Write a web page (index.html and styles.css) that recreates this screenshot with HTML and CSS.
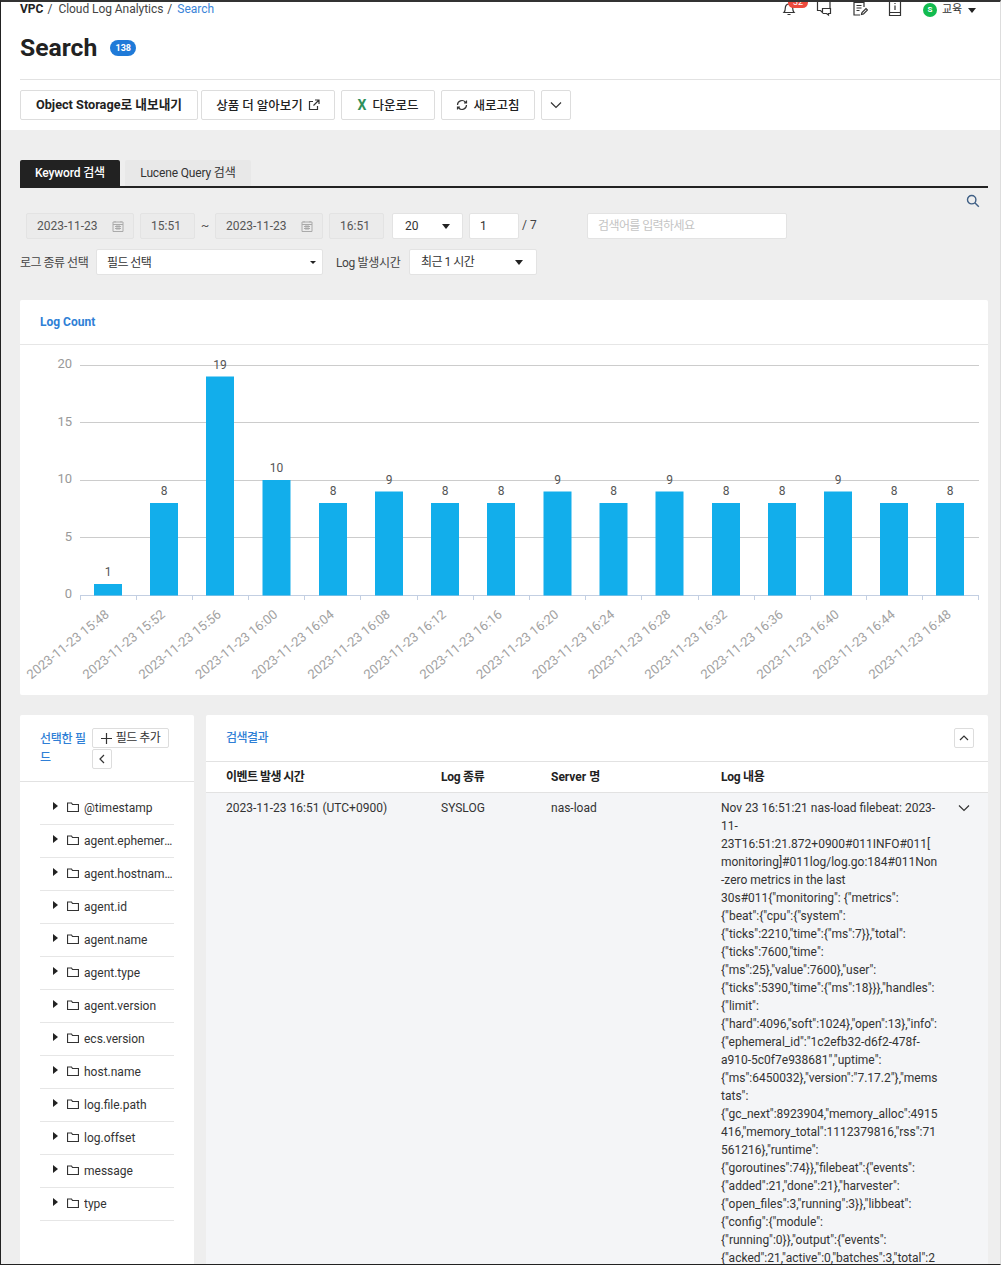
FILE: index.html
```html
<!DOCTYPE html>
<html lang="ko">
<head>
<meta charset="utf-8">
<title>Search</title>
<link rel="stylesheet" href="styles.css">
</head>
<body>
<div class="page">
  <header class="head">
    <div class="topbar">
      <div class="crumbs"><b>VPC</b><span class="sep">/</span><span>Cloud Log Analytics</span><span class="sep">/</span><span class="cur">Search</span></div>
      <div class="tools">
        <span class="tool bell">
          <svg width="16" height="16" viewBox="0 0 16 16" class="ico"><path d="M3 11.5c1.2-1.2 1.3-2.6 1.3-4.4C4.300 4.600 5.900 3 8 3s3.700 1.600 3.700 4.100c0 1.800.1 3.200 1.300 4.400zM6.500 13.500h3"/></svg>
          <span class="redbadge">32</span>
        </span>
        <svg width="16" height="16" viewBox="0 0 16 16" class="ico tool t2"><path d="M1.500 1v8.500h3l2 2V7.500h8v5h-2v1.500l-2-1.500H7M14 7V1"/></svg>
        <svg width="16" height="16" viewBox="0 0 16 16" class="ico tool t3"><path d="M12 6V1.500H2v12.500h6M4.500 4.500h5M4.500 7h5M4.500 9.500h3M9.500 13.500l.5-2 4-4 1.500 1.500-4 4z"/></svg>
        <svg width="16" height="16" viewBox="0 0 16 16" class="ico tool t4"><path d="M2.500 1v13.500h11V1M2.500 11.500h11M8 2v1M8 4.500V9"/></svg>
        <span class="user"><span class="avatar">S</span><span>교육</span><i class="caret"></i></span>
      </div>
    </div>
    <div class="titlerow"><h1>Search</h1><span class="count">138</span></div>
    <div class="actions">
      <button class="btn strong">Object Storage로 내보내기</button>
      <button class="btn">상품 더 알아보기
        <svg width="12" height="12" viewBox="0 0 12 12" class="ico"><path d="M9.500 7v3.500h-8v-8H5M7 1h4v4M11 1L5.500 6.500"/></svg>
      </button>
      <button class="btn dl"><span class="xl">X</span>다운로드</button>
      <button class="btn ref">
        <svg width="12" height="12" viewBox="0 0 12 12" class="ico"><path d="M1.500 6a4.500 4.500 0 0 1 7.800-3l1 1M10.500 6a4.500 4.500 0 0 1-7.800 3l-1-1M10.500 1.500V4H8M1.500 10.500V8H4"/></svg>
        새로고침</button>
      <button class="btn more"><svg width="12" height="8" viewBox="0 0 12 8" class="ico"><path d="M1 1.500l5 5 5-5"/></svg></button>
    </div>
  </header>

  <main class="content">
    <div class="tabs">
      <div class="tab on">Keyword 검색</div>
      <div class="tab">Lucene Query 검색</div>
    </div>
    <div class="searchicon"><svg width="14" height="14" viewBox="0 0 14 14" class="ico blue"><circle cx="5.700" cy="5.700" r="4.200"/><path d="M8.800 8.800l4 4"/></svg></div>

    <div class="filters">
      <div class="field off date">2023-11-23<svg width="12" height="12" viewBox="0 0 12 12" class="cal"><path d="M1 2h10v9.500H1zM1 4.500h10M3 1v1.500M9 1v1.500M3 6.500h6M3 8.500h6M5 5v5M7 5v5"/></svg></div>
      <div class="field off time">15:51</div>
      <span class="tilde">~</span>
      <div class="field off date">2023-11-23<svg width="12" height="12" viewBox="0 0 12 12" class="cal"><path d="M1 2h10v9.500H1zM1 4.500h10M3 1v1.500M9 1v1.500M3 6.500h6M3 8.500h6M5 5v5M7 5v5"/></svg></div>
      <div class="field off time">16:51</div>
      <div class="field sel size">20<i class="caret"></i></div>
      <div class="field page-no">1</div>
      <span class="pages">/ 7</span>
      <div class="field kw">검색어를 입력하세요</div>
    </div>
    <div class="filters second">
      <span class="lbl">로그 종류 선택</span>
      <div class="field sel type"><span class="seltext">필드 선택</span><i class="caret small"></i></div>
      <span class="lbl lbl2">Log 발생시간</span>
      <div class="field sel range">최근 1 시간<i class="caret"></i></div>
    </div>

    <section class="card chart">
      <div class="cardhead">Log Count</div>
      <svg class="plot" width="968" height="350" viewBox="20 345 968 350">
        <g class="grid">
          <path d="M80 365.500H979M80 422.500H979M80 480.500H979M80 537.500H979"/>
        </g>
        <path class="axis" d="M80 595.500H979M80.500 595v5M136.500 595v5M192.500 595v5M248.500 595v5M304.500 595v5M360.500 595v5M417.500 595v5M473.500 595v5M529.500 595v5M585.500 595v5M641.500 595v5M698.500 595v5M754.500 595v5M810.500 595v5M866.500 595v5M922.500 595v5M978.500 595v5"/>
        <g class="yl">
          <text x="72" y="368">20</text><text x="72" y="426">15</text><text x="72" y="483">10</text><text x="72" y="541">5</text><text x="72" y="598">0</text>
        </g>
        <g class="bars">
          <rect x="94" y="584" width="28" height="11.500"/>
          <rect x="150" y="503" width="28" height="92.500"/>
          <rect x="206" y="376.500" width="28" height="219"/>
          <rect x="262.500" y="480" width="28" height="115.500"/>
          <rect x="319" y="503" width="28" height="92.500"/>
          <rect x="375" y="491.500" width="28" height="104"/>
          <rect x="431" y="503" width="28" height="92.500"/>
          <rect x="487" y="503" width="28" height="92.500"/>
          <rect x="543.500" y="491.500" width="28" height="104"/>
          <rect x="599.500" y="503" width="28" height="92.500"/>
          <rect x="655.500" y="491.500" width="28" height="104"/>
          <rect x="712" y="503" width="28" height="92.500"/>
          <rect x="768" y="503" width="28" height="92.500"/>
          <rect x="824" y="491.500" width="28" height="104"/>
          <rect x="880" y="503" width="28" height="92.500"/>
          <rect x="936" y="503" width="28" height="92.500"/>
        </g>
        <g class="vals">
          <text x="108" y="576">1</text><text x="164" y="495">8</text><text x="220" y="369">19</text><text x="276.500" y="472">10</text><text x="333" y="495">8</text><text x="389" y="484">9</text><text x="445" y="495">8</text><text x="501" y="495">8</text><text x="557.500" y="484">9</text><text x="613.500" y="495">8</text><text x="669.500" y="484">9</text><text x="726" y="495">8</text><text x="782" y="495">8</text><text x="838" y="484">9</text><text x="894" y="495">8</text><text x="950" y="495">8</text>
        </g>
        <g class="xl">
          <text transform="translate(110 616) rotate(-39)">2023-11-23 15:48</text>
          <text transform="translate(166 616) rotate(-39)">2023-11-23 15:52</text>
          <text transform="translate(222 616) rotate(-39)">2023-11-23 15:56</text>
          <text transform="translate(278.500 616) rotate(-39)">2023-11-23 16:00</text>
          <text transform="translate(335 616) rotate(-39)">2023-11-23 16:04</text>
          <text transform="translate(391 616) rotate(-39)">2023-11-23 16:08</text>
          <text transform="translate(447 616) rotate(-39)">2023-11-23 16:12</text>
          <text transform="translate(503 616) rotate(-39)">2023-11-23 16:16</text>
          <text transform="translate(559.500 616) rotate(-39)">2023-11-23 16:20</text>
          <text transform="translate(615.500 616) rotate(-39)">2023-11-23 16:24</text>
          <text transform="translate(671.500 616) rotate(-39)">2023-11-23 16:28</text>
          <text transform="translate(728 616) rotate(-39)">2023-11-23 16:32</text>
          <text transform="translate(784 616) rotate(-39)">2023-11-23 16:36</text>
          <text transform="translate(840 616) rotate(-39)">2023-11-23 16:40</text>
          <text transform="translate(896 616) rotate(-39)">2023-11-23 16:44</text>
          <text transform="translate(952 616) rotate(-39)">2023-11-23 16:48</text>
        </g>
      </svg>
    </section>

    <div class="lower">
      <aside class="card side">
        <div class="sidehead">
          <div class="sidetitle">선택한 필<br>드</div>
          <div class="sidebtns">
            <button class="mini add"><svg width="11" height="11" viewBox="0 0 11 11" class="ico"><path d="M5.500 0v11M0 5.500h11"/></svg>필드 추가</button>
            <button class="mini back"><svg width="6" height="10" viewBox="0 0 6 10" class="ico"><path d="M5 1L1 5l4 4"/></svg></button>
          </div>
        </div>
        <ul class="fields">
          <li><i class="tri"></i><svg width="12" height="10" viewBox="0 0 12 10" class="ico"><path d="M.5 1h4l1 1.500h6v7H.5z"/></svg><span>@timestamp</span></li>
          <li><i class="tri"></i><svg width="12" height="10" viewBox="0 0 12 10" class="ico"><path d="M.5 1h4l1 1.500h6v7H.5z"/></svg><span>agent.ephemeral_id</span></li>
          <li><i class="tri"></i><svg width="12" height="10" viewBox="0 0 12 10" class="ico"><path d="M.5 1h4l1 1.500h6v7H.5z"/></svg><span>agent.hostname.keyword</span></li>
          <li><i class="tri"></i><svg width="12" height="10" viewBox="0 0 12 10" class="ico"><path d="M.5 1h4l1 1.500h6v7H.5z"/></svg><span>agent.id</span></li>
          <li><i class="tri"></i><svg width="12" height="10" viewBox="0 0 12 10" class="ico"><path d="M.5 1h4l1 1.500h6v7H.5z"/></svg><span>agent.name</span></li>
          <li><i class="tri"></i><svg width="12" height="10" viewBox="0 0 12 10" class="ico"><path d="M.5 1h4l1 1.500h6v7H.5z"/></svg><span>agent.type</span></li>
          <li><i class="tri"></i><svg width="12" height="10" viewBox="0 0 12 10" class="ico"><path d="M.5 1h4l1 1.500h6v7H.5z"/></svg><span>agent.version</span></li>
          <li><i class="tri"></i><svg width="12" height="10" viewBox="0 0 12 10" class="ico"><path d="M.5 1h4l1 1.500h6v7H.5z"/></svg><span>ecs.version</span></li>
          <li><i class="tri"></i><svg width="12" height="10" viewBox="0 0 12 10" class="ico"><path d="M.5 1h4l1 1.500h6v7H.5z"/></svg><span>host.name</span></li>
          <li><i class="tri"></i><svg width="12" height="10" viewBox="0 0 12 10" class="ico"><path d="M.5 1h4l1 1.500h6v7H.5z"/></svg><span>log.file.path</span></li>
          <li><i class="tri"></i><svg width="12" height="10" viewBox="0 0 12 10" class="ico"><path d="M.5 1h4l1 1.500h6v7H.5z"/></svg><span>log.offset</span></li>
          <li><i class="tri"></i><svg width="12" height="10" viewBox="0 0 12 10" class="ico"><path d="M.5 1h4l1 1.500h6v7H.5z"/></svg><span>message</span></li>
          <li><i class="tri"></i><svg width="12" height="10" viewBox="0 0 12 10" class="ico"><path d="M.5 1h4l1 1.500h6v7H.5z"/></svg><span>type</span></li>
        </ul>
      </aside>
      <section class="card results">
        <div class="reshead">
          <span class="restitle">검색결과</span>
          <button class="mini up"><svg width="10" height="6" viewBox="0 0 10 6" class="ico"><path d="M1 5l4-4 4 4"/></svg></button>
        </div>
        <div class="tr th">
          <div class="c1">이벤트 발생 시간</div><div class="c2">Log 종류</div><div class="c3">Server 명</div><div class="c4">Log 내용</div>
        </div>
        <div class="tr td">
          <div class="c1">2023-11-23 16:51 (UTC+0900)</div>
          <div class="c2">SYSLOG</div>
          <div class="c3">nas-load</div>
          <div class="c4">Nov 23 16:51:21 nas-load filebeat: 2023-<br>11-<br>23T16:51:21.872+0900#011INFO#011[<br>monitoring]#011log/log.go:184#011Non<br>-zero metrics in the last<br>30s#011{"monitoring": {"metrics":<br>{"beat":{"cpu":{"system":<br>{"ticks":2210,"time":{"ms":7}},"total":<br>{"ticks":7600,"time":<br>{"ms":25},"value":7600},"user":<br>{"ticks":5390,"time":{"ms":18}}},"handles":<br>{"limit":<br>{"hard":4096,"soft":1024},"open":13},"info":<br>{"ephemeral_id":"1c2efb32-d6f2-478f-<br>a910-5c0f7e938681","uptime":<br>{"ms":6450032},"version":"7.17.2"},"mems<br>tats":<br>{"gc_next":8923904,"memory_alloc":4915<br>416,"memory_total":1112379816,"rss":71<br>561216},"runtime":<br>{"goroutines":74}},"filebeat":{"events":<br>{"added":21,"done":21},"harvester":<br>{"open_files":3,"running":3}},"libbeat":<br>{"config":{"module":<br>{"running":0}},"output":{"events":<br>{"acked":21,"active":0,"batches":3,"total":2</div>
          <svg width="12" height="8" viewBox="0 0 12 8" class="ico rowchev"><path d="M1 1.500l5 5 5-5"/></svg>
        </div>
      </section>
    </div>
  </main>
</div>
</body>
</html>
```
FILE: styles.css
```css
* { box-sizing: border-box; }
html, body { margin: 0; padding: 0; }
body {
  width: 1001px; height: 1265px; overflow: hidden; background: #fff;
  font-family: Roboto, "Noto Sans CJK KR", sans-serif; font-size: 12px; color: #333;
}
.page {
  width: 1001px; height: 1265px; overflow: hidden; display: flex; flex-direction: column;
  border-top: 2px solid #333; border-left: 1px solid #222; border-bottom: 1px solid #222; border-right: 1px solid #ddd;
}
.ico { fill: none; stroke: #333; stroke-width: 1.2; display: block; flex: none; }
.ico.blue { stroke: #3f5f85; stroke-width: 1.4; }

/* header */
.head { background: #fff; height: 128px; flex: none; padding-left: 19px; }
.topbar { height: 15px; display: flex; justify-content: space-between; line-height: 15px; }
.crumbs { display: flex; color: #444; }
.crumbs b { color: #222; font-weight: 700; }
.crumbs .sep { margin: 0 6px 0 4px; }
.crumbs span:nth-child(3) { letter-spacing: -.05px; }
.crumbs .cur { color: #3a84d8; margin-left: -1px; }
.tools { display: flex; align-items: center; position: relative; width: 225px; overflow: hidden; height: 16px; }
.tool { position: relative; }
.bell { position: absolute; left: 6px; top: -1px; width: 30px; height: 17px; }
.redbadge {
  position: absolute; left: 7px; top: -4px; width: 20px; height: 11px; border-radius: 6px;
  background: #ee4a3c; color: #fff; font-size: 9px; line-height: 11px; text-align: center;
}
.t2 { position: absolute; left: 41px; top: -1px; }
.t3 { position: absolute; left: 77px; top: -1px; }
.t4 { position: absolute; left: 112px; top: -1px; }
.user { position: absolute; left: 148px; top: 0; display: flex; align-items: center; font-size: 11px; color: #333; line-height: 14px; height: 16px; }
.avatar {
  width: 14px; height: 14px; border-radius: 50%; background: #12bb4f; color: #fff; font-size: 8px; font-weight: 700;
  text-align: center; line-height: 14px; margin-right: 5px;
}
.user .caret { margin-left: 6px; }
.caret { display: block; width: 0; height: 0; border: 4px solid transparent; border-top: 5px solid #222; border-bottom: 0; flex: none; }
.caret.small { border-width: 3px; border-top-width: 3px; border-bottom: 0; }
.titlerow { height: 63px; border-bottom: 1px solid #e2e2e2; display: flex; align-items: flex-start; padding-top: 16px; }
h1 { margin: 0; font-size: 24.700px; line-height: 30px; font-weight: 700; color: #222; }
.count {
  margin: 7px 0 0 13px; width: 26px; height: 16px; border-radius: 8px; background: #1f7ad8; color: #fff;
  font-size: 9px; font-weight: 700; text-align: center; line-height: 16px;
}
.actions { display: flex; gap: 3px; padding-top: 10px; }
.btn {
  height: 30px; background: #fff; border: 1px solid #ddd; border-radius: 2px; font: 500 12.5px/1 Roboto, "Noto Sans CJK KR", sans-serif; color: #222;
  display: flex; align-items: center; justify-content: center; gap: 5px; padding: 2px 0 0; width: 130px;
}
.btn .ico { margin-top: -2px; }
.btn.strong { width: 178px; font-weight: 700; font-size: 12.7px; padding-top: 1px; }
.btn:nth-child(2) { width: 134px; margin-right: 3px; }
.btn.dl { width: 94px; margin-right: 3px; gap: 6px; }
.btn.ref { width: 94px; margin-right: 3px; }
.btn.more { width: 30px; }
.xl { color: #2f8f5b; font-weight: 700; font-size: 14px; margin-top: -2px; }

/* content */
.content { flex: 1; background: #eee; padding: 30px 12px 0 19px; min-height: 0; }
.tabs { display: flex; gap: 5px; border-bottom: 2px solid #222; height: 28px; letter-spacing: -.15px; }
.tab {
  height: 26px; width: 126px; text-align: center; line-height: 26px; background: #e8e8e8; color: #333; border-radius: 2px 2px 0 0;
}
.tab.on { width: 100px; background: #222; color: #fff; font-weight: 500; }
.searchicon { height: 25px; display: flex; justify-content: flex-end; padding: 6px 8px 0 0; }
.filters { display: flex; align-items: center; height: 26px; padding-left: 6px; }
.second { margin-top: 10px; padding-left: 0; }
.field {
  height: 26px; border: 1px solid #e3e3e3; border-radius: 2px; background: #fff; line-height: 24px; color: #333;
  display: flex; align-items: center; flex: none;
}
.field.off { background: #ebebeb; color: #555; }
.date { width: 108px; padding: 0 9px 0 10px; justify-content: space-between; margin-right: 6px; }
.time { width: 55px; padding-left: 10px; }
.tilde { width: 20px; text-align: center; color: #555; }
.cal { fill: none; stroke: #aaa; stroke-width: 1; }
.size { width: 71px; margin-left: 8px; padding: 0 12px 0 12px; justify-content: space-between; }
.page-no { width: 50px; margin-left: 6px; padding-left: 10px; }
.pages { margin-left: 3px; width: 65px; color: #444; padding-bottom: 2px; }
.kw { width: 200px; padding-left: 10px; color: #c4c4c4; letter-spacing: -.6px; }
.lbl { width: 76px; color: #444; letter-spacing: -.5px; padding-bottom: 2px; }
.lbl2 { width: 73px; margin-left: 13px; letter-spacing: -.35px; }
.type { width: 227px; padding: 0 6px 0 10px; justify-content: space-between; letter-spacing: -.6px; }
.seltext { padding-top: 2px; }
.range { width: 128px; padding: 0 13px 0 11px; justify-content: space-between; letter-spacing: -.5px; }

.card { background: #fff; border-radius: 2px; }
.chart { margin-top: 25px; width: 968px; height: 395px; }
.cardhead { height: 45px; padding-left: 20px; line-height: 44px; color: #2f7fd6; font-weight: 700; border-bottom: 1px solid #e6e6e6; }
.plot { display: block; }
.grid path { stroke: #ccc; stroke-width: 1; fill: none; }
.axis { stroke: #c3cfe2; stroke-width: 1; fill: none; }
.bars rect { fill: #12aeeb; }
.yl text { font-size: 13px; fill: #999; text-anchor: end; }
.vals text { font-size: 12px; fill: #555; text-anchor: middle; }
.xl text { font-size: 13px; fill: #a2a2a2; text-anchor: end; font-weight: 400; }

.lower { display: flex; gap: 12px; margin-top: 20px; height: 560px; }
.side { width: 174px; flex: none; }
.sidehead { height: 67px; border-bottom: 1px solid #e2e2e2; display: flex; padding: 13px 0 0 20px; }
.sidetitle { width: 52px; padding-top: 2px; white-space: nowrap; letter-spacing: -.3px; color: #2f7fd6; line-height: 19px; font-weight: 500; }
.sidebtns { display: flex; flex-direction: column; gap: 1px; align-items: flex-start; }
.mini {
  background: #fff; border: 1px solid #ddd; border-radius: 2px; padding: 0; display: flex; align-items: center; justify-content: center;
  font: 400 12px/1 Roboto, "Noto Sans CJK KR", sans-serif; color: #333;
}
.add { width: 77px; height: 20px; gap: 4px; letter-spacing: -.5px; }
.back { width: 20px; height: 20px; }
.fields { list-style: none; margin: 10px 20px 0; padding: 0; }
.fields li { height: 33px; border-bottom: 1px solid #e6e6e6; display: flex; align-items: center; color: #333; padding-left: 13px; padding-bottom: 1px; }
.tri { width: 0; height: 0; border: 4px solid transparent; border-left: 5px solid #222; border-right: 0; margin-right: 9px; margin-top: -3px; flex: none; }
.fields li .ico { margin-right: 5px; margin-top: -1px; }
.fields li span { flex: 1; min-width: 0; white-space: nowrap; overflow: hidden; text-overflow: ellipsis; }

.results { flex: 1; min-width: 0; }
.reshead { height: 47px; border-bottom: 1px solid #e2e2e2; display: flex; justify-content: space-between; padding: 13px 14px 0 20px; }
.restitle { color: #2f7fd6; line-height: 18px; font-weight: 500; letter-spacing: -.5px; padding-top: 1px; }
.up { width: 20px; height: 20px; }
.tr { display: flex; padding-left: 20px; position: relative; }
.c1 { width: 215px; } .c2 { width: 110px; } .c3 { width: 170px; } .c4 { width: 225px; }
.th { height: 31px; border-bottom: 1px solid #e2e2e2; font-weight: 700; color: #222; line-height: 30px; }
.th .c1 { letter-spacing: -.55px; }
.th .c2, .th .c4 { letter-spacing: -.3px; }
.td { background: #f4f5f7; padding-top: 6px; line-height: 18px; min-height: 480px; color: #333; }
.rowchev { position: absolute; left: 752px; top: 11px; }
```
